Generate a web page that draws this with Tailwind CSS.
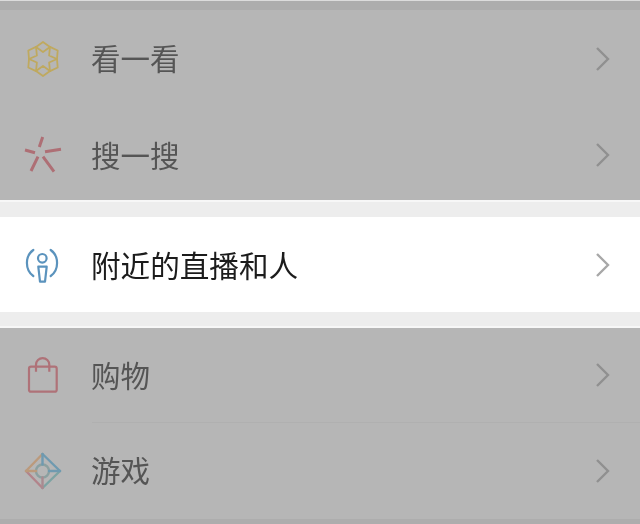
<!doctype html>
<html>
<head>
<meta charset="utf-8">
<script src="https://cdn.jsdelivr.net/npm/@tailwindcss/browser@4"></script>
</head>
<body class="w-[640px] h-[524px] overflow-hidden bg-[#b6b6b6] font-['Noto_Sans_CJK_SC','Noto_Sans',sans-serif]">
  <div class="blur-[0.4px]">
  <!-- Top edge -->
  <div class="h-px bg-[#dcdcdc]"></div>
  <div class="h-[9px] bg-[#adadad]"></div>

  <!-- 看一看 -->
  <div class="h-[97px] flex items-center pl-[24px] pr-[29px] text-[#555555]">
    <svg class="w-[38px] h-[38px] shrink-0" viewBox="0 0 38 38" fill="none" stroke="#bfa95f" stroke-width="1.800" stroke-linejoin="round">
      <path d="M19 2L26 6.900 33.700 10.500 33 19 33.700 27.500 26 31.100 19 36 12 31.100 4.300 27.500 5 19 4.300 10.500 12 6.900z" />
      <path d="M19 12L26 6.900 25.100 15.500 33 19 25.100 22.500 26 31.100 19 26 12 31.100 12.900 22.500 5 19 12.900 15.500 12 6.900z" />
    </svg>
    <span class="ml-[29px] -mt-[2px] text-[29.500px] leading-none">看一看</span>
    <svg class="ml-auto w-[16px] h-[26px]" viewBox="0 0 16 26" fill="none" stroke="#909090" stroke-width="2.400"><path d="M2 2l11 11L2 24" /></svg>
  </div>

  <!-- 搜一搜 -->
  <div class="h-[93px] pt-[3px] flex items-center pl-[24px] pr-[29px] text-[#555555]">
    <svg class="w-[38px] h-[38px] shrink-0" viewBox="0 0 38 38" fill="none" stroke="#ae6f75" stroke-width="3">
      <path d="M18.700 1l-3.400 10M1 14l10 2.700M21 15.700l16-2.400M14 20.700L7 35M19 20.700l11 15" />
    </svg>
    <span class="ml-[29px] -mt-px text-[29.500px] leading-none">搜一搜</span>
    <svg class="ml-auto w-[16px] h-[26px]" viewBox="0 0 16 26" fill="none" stroke="#909090" stroke-width="2.400"><path d="M2 2l11 11L2 24" /></svg>
  </div>

  <div class="h-[2px] bg-[#f7f7f7]"></div>
  <div class="h-[15px] bg-[#ededed]"></div>

  <!-- 附近的直播和人 -->
  <div class="h-[95px] bg-white flex items-center pl-[24px] pr-[29px] text-[#1c1c1c]">
    <svg class="w-[38px] h-[38px] shrink-0" viewBox="0 0 38 38" fill="none" stroke="#5b93bd" stroke-width="2.200" stroke-linecap="round" stroke-linejoin="round">
      <path d="M9.300 4C.8 10 .8 24 9.300 30M26.700 4c8.500 6 8.500 20 0 26" />
      <circle cx="18.300" cy="12.300" r="4.300" />
      <path d="M14.300 20.700h8.400l-1.700 15h-5z" />
    </svg>
    <span class="ml-[29px] text-[29.600px] leading-none">附近的直播和人</span>
    <svg class="ml-auto w-[16px] h-[26px]" viewBox="0 0 16 26" fill="none" stroke="#a8a8a8" stroke-width="2.400"><path d="M2 2l11 11L2 24" /></svg>
  </div>

  <div class="h-[14px] bg-[#ededed]"></div>
  <div class="h-[2px] bg-[#f7f7f7]"></div>

  <!-- 购物 -->
  <div class="h-[94px] flex items-center pl-[24px] pr-[29px] text-[#555555]">
    <svg class="w-[38px] h-[38px] shrink-0" viewBox="0 0 38 38" fill="none" stroke="#af7278" stroke-width="2.200" stroke-linejoin="round">
      <rect x="5" y="10.700" width="27.700" height="25" rx="2" />
      <path d="M12 15.700V8.700a6.650 6.650 0 0 1 13.300 0v7" />
    </svg>
    <span class="ml-[29px] -mt-px text-[29.500px] leading-none">购物</span>
    <svg class="ml-auto w-[16px] h-[26px]" viewBox="0 0 16 26" fill="none" stroke="#909090" stroke-width="2.400"><path d="M2 2l11 11L2 24" /></svg>
  </div>

  <div class="ml-[92px] h-px bg-[#b0b0b0]"></div>

  <!-- 游戏 -->
  <div class="h-[96px] flex items-center pl-[24px] pr-[29px] text-[#555555]">
    <svg class="w-[38px] h-[38px] shrink-0" viewBox="0 0 38 38" fill="none" stroke-width="2.400" stroke-linecap="round">
      <path d="M18.500 2L2 19" stroke="#bb9a7c" />
      <path d="M18.500 2L36 19" stroke="#6f9ab0" />
      <path d="M36 19L18.500 36" stroke="#7da3a3" />
      <path d="M18.500 36L2 19" stroke="#b2848b" />
      <circle cx="18.500" cy="19" r="6.500" stroke="#8ba0a0" />
      <path d="M18.500 2v10.500" stroke="#6f9ab0" />
      <path d="M2 19h10" stroke="#bb9a7c" />
      <path d="M25 19h11" stroke="#6f9ab0" />
      <path d="M18.500 25.500V36" stroke="#a98a90" />
    </svg>
    <span class="ml-[29px] -mt-[2px] text-[29.500px] leading-none">游戏</span>
    <svg class="ml-auto w-[16px] h-[26px]" viewBox="0 0 16 26" fill="none" stroke="#909090" stroke-width="2.400"><path d="M2 2l11 11L2 24" /></svg>
  </div>

  <div class="h-[5px] bg-[#adadad]"></div>
  </div>
</body>
</html>
